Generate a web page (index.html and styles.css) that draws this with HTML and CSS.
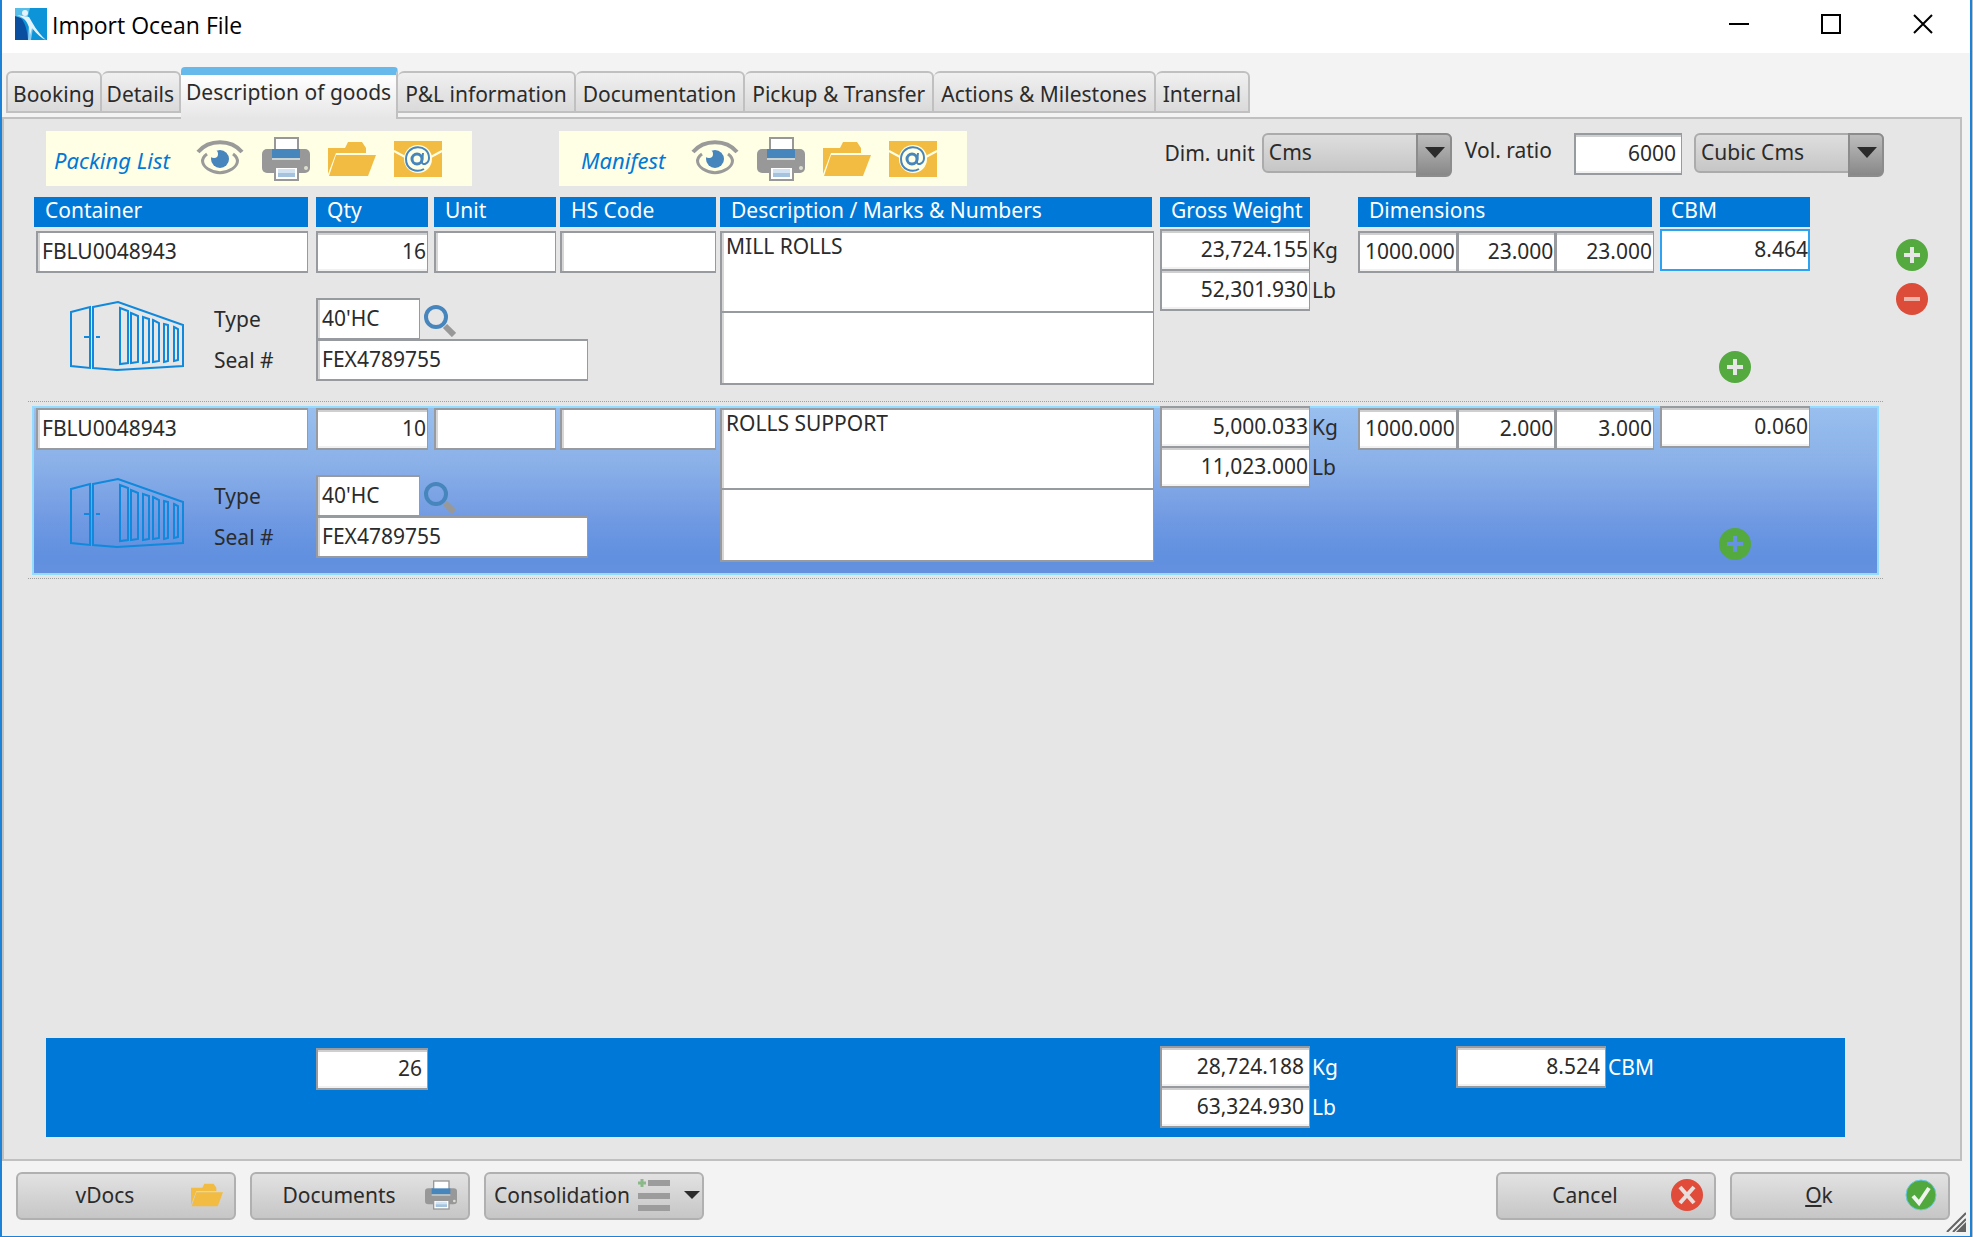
FILE: index.html
```html
<!DOCTYPE html>
<html lang="en">

<head>
    <meta charset="UTF-8">
    <meta name="viewport" content="width=device-width, initial-scale=1.0">
    <title>Import Ocean File</title>
    <link rel="stylesheet" href="styles.css">
</head>

<body>
    <!-- Shared icons -->
    <svg class="icon-defs" aria-hidden="true">
        <symbol id="icon-eye" viewBox="0 0 48 44">
            <path d="M2 15C13 2 35 2 46 15" fill="none" stroke="#9a9a9a" stroke-width="4" />
            <path d="M11 17C4 22 6 28 12 32c8 5 16 5 24 0 6-4 8-10 1-15" fill="none" stroke="#9a9a9a" stroke-width="3" />
            <circle cx="24" cy="22" r="9" fill="#4785bd" />
            <circle cx="18" cy="17" r="4" fill="#ffffe5" />
        </symbol>
        <symbol id="icon-printer" viewBox="0 0 48 44">
            <rect x="0" y="12" width="48" height="24" rx="5" fill="#989898" />
            <rect x="13" y="1" width="23" height="13" fill="#fff" stroke="#989898" stroke-width="2" />
            <rect x="10" y="12" width="28" height="9" fill="#4785bd" />
            <rect x="10" y="21" width="28" height="2" fill="#c8d3d6" />
            <rect x="13" y="30" width="23" height="13" fill="#fff" stroke="#989898" stroke-width="2" />
            <rect x="16" y="32" width="17" height="5" fill="#d3e3f2" />
            <rect x="16" y="36" width="17" height="4" fill="#a5c3df" />
            <circle cx="44" cy="31" r="2" fill="#deded0" />
        </symbol>
        <symbol id="icon-folder" viewBox="0 0 48 36">
            <path d="M0 33V7h17l3-6h14l4 6v5H8z" fill="#f1bc41" />
            <path d="M8 14h40l-8 21H1z" fill="#f1bc41" />
        </symbol>
        <symbol id="icon-mail" viewBox="0 0 48 36">
            <rect width="48" height="36" fill="#f1bc41" />
            <path d="M0 10l13 7M48 10l-13 7" stroke="#ffffe5" stroke-width="2" />
            <circle cx="24" cy="18" r="14" fill="#ffffe5" />
            <circle cx="23" cy="18" r="5" fill="none" stroke="#4785bd" stroke-width="3" />
            <path d="M29 12l-1 9c0 4 7 2 7-4 0-15-23-14-23 1 0 11 11 14 18 10" fill="none" stroke="#4785bd" stroke-width="2" />
        </symbol>
        <symbol id="icon-container" viewBox="0 0 114 70">
            <g fill="none" stroke="#1089dc" stroke-width="2">
                <path d="M1 11l19-5v61L1 65zM23 6l25-5 65 23v41l-66 4-24-2z" />
                <path d="M50 7l8 3v52l-8 1zM61 12l7 3v46l-7 1zM73 16l6 2v43l-6 1zM83 19l6 3v38l-6 1zM94 23l4 1v36l-4 1zM104 26l4 2v31l-4 1z" />
                <path d="M14 36h5M26 36h4" />
            </g>
        </symbol>
        <symbol id="icon-search" viewBox="0 0 32 32">
            <circle cx="12" cy="12" r="10" fill="none" stroke="#4785bd" stroke-width="4" />
            <path d="M21 21l9 9" stroke="#989898" stroke-width="6" />
        </symbol>
        <symbol id="icon-plus" viewBox="0 0 32 32">
            <path fill="#54a93f" fill-rule="evenodd" d="M16 0a16 16 0 1 1 0 32 16 16 0 0 1 0-32zM14 8v6H8v4h6v6h4v-6h6v-4h-6V8z" />
        </symbol>
        <symbol id="icon-minus" viewBox="0 0 32 32">
            <circle cx="16" cy="16" r="16" fill="#dc4c38" />
            <rect x="8" y="14" width="16" height="4" fill="#edb4ac" />
        </symbol>
    </svg>

    <div class="window">
        <header class="titlebar">
            <svg class="app-logo" viewBox="0 0 32 32" aria-hidden="true">
                <rect width="32" height="32" fill="#0d93d8" />
                <path d="M0 6c8 3 12 12 13 26H0z" fill="#0a4f9f" />
                <path d="M0 0h15l-3 12L0 8z" fill="#55bde8" />
                <path d="M14 14l4 6-2 12h-3z" fill="#8ccbee" />
                <path d="M2 7c8 3 10 7 12 12l1 8 2-7c5 6 9 10 14 12C22 24 17 14 14 9z" fill="#e3f3fc" />
                <circle cx="10" cy="5" r="3" fill="#e3f3fc" />
            </svg>
            <h1>Import Ocean File</h1>
            <div class="window-buttons">
                <button type="button" aria-label="Minimize"><svg viewBox="0 0 20 20"><path d="M0 10h20" /></svg></button>
                <button type="button" aria-label="Maximize"><svg viewBox="0 0 20 20"><path d="M1 1h18v18H1z" /></svg></button>
                <button type="button" aria-label="Close"><svg viewBox="0 0 20 20"><path d="M1 1l18 18M19 1L1 19" /></svg></button>
            </div>
        </header>

        <nav class="tabs">
            <a href="#booking">Booking</a>
            <a href="#details">Details</a>
            <a href="#goods" class="active">Description of goods</a>
            <a href="#pl">P&amp;L information</a>
            <a href="#documentation">Documentation</a>
            <a href="#pickup">Pickup &amp; Transfer</a>
            <a href="#actions">Actions &amp; Milestones</a>
            <a href="#internal">Internal</a>
        </nav>

        <main class="panel" id="goods">
            <div class="toolbar">
                <div class="doc-group">
                    <span class="doc-name">Packing List</span>
                    <button type="button" aria-label="View packing list"><svg class="icon-tall"><use href="#icon-eye" /></svg></button>
                    <button type="button" aria-label="Print packing list"><svg class="icon-tall"><use href="#icon-printer" /></svg></button>
                    <button type="button" aria-label="Open packing list"><svg class="icon-wide"><use href="#icon-folder" /></svg></button>
                    <button type="button" aria-label="Email packing list"><svg class="icon-wide"><use href="#icon-mail" /></svg></button>
                </div>
                <div class="doc-group manifest">
                    <span class="doc-name">Manifest</span>
                    <button type="button" aria-label="View manifest"><svg class="icon-tall"><use href="#icon-eye" /></svg></button>
                    <button type="button" aria-label="Print manifest"><svg class="icon-tall"><use href="#icon-printer" /></svg></button>
                    <button type="button" aria-label="Open manifest"><svg class="icon-wide"><use href="#icon-folder" /></svg></button>
                    <button type="button" aria-label="Email manifest"><svg class="icon-wide"><use href="#icon-mail" /></svg></button>
                </div>
                <div class="units">
                    <label for="dim-unit">Dim. unit</label>
                    <span class="select">
                        <select id="dim-unit">
                            <option>Cms</option>
                        </select>
                    </span>
                    <label class="ratio-label" for="vol-ratio">Vol. ratio</label>
                    <input class="field number ratio" type="text" id="vol-ratio" value="6000">
                    <span class="select">
                        <select aria-label="Volume unit">
                            <option>Cubic Cms</option>
                        </select>
                    </span>
                </div>
            </div>

            <div class="goods">
                <table>
                    <thead>
                        <tr>
                            <th>Container</th>
                            <th>Qty</th>
                            <th>Unit</th>
                            <th>HS Code</th>
                            <th>Description / Marks &amp; Numbers</th>
                            <th>Gross Weight</th>
                            <th>Dimensions</th>
                            <th>CBM</th>
                        </tr>
                    </thead>
                    <tbody>
                        <tr>
                            <td class="container"><input class="field" type="text" aria-label="Container" value="FBLU0048943"></td>
                            <td class="qty"><input class="field number" type="text" aria-label="Qty" value="16"></td>
                            <td class="unit"><input class="field" type="text" aria-label="Unit"></td>
                            <td class="hs"><input class="field" type="text" aria-label="HS Code"></td>
                            <td class="desc">
                                <textarea class="field" aria-label="Description">MILL ROLLS</textarea>
                                <textarea class="field marks" aria-label="Marks and numbers"></textarea>
                            </td>
                            <td class="weight">
                                <div><input class="field number" type="text" id="kg-1" value="23,724.155"><label for="kg-1">Kg</label></div>
                                <div><input class="field number" type="text" id="lb-1" value="52,301.930"><label for="lb-1">Lb</label></div>
                            </td>
                            <td class="dims">
                                <input class="field number" type="text" aria-label="Length" value="1000.000">
                                <input class="field number" type="text" aria-label="Width" value="23.000">
                                <input class="field number" type="text" aria-label="Height" value="23.000">
                            </td>
                            <td class="cbm">
                                <input class="field number focused" type="text" aria-label="CBM" value="8.464">
                                <button type="button" aria-label="Add dimensions"><svg class="icon-round"><use href="#icon-plus" /></svg></button>
                            </td>
                            <td class="equipment">
                                <svg class="icon-container"><use href="#icon-container" /></svg>
                                <div class="equipment-fields">
                                    <label for="type-1">Type</label>
                                    <div class="lookup">
                                        <input class="field" type="text" id="type-1" value="40'HC">
                                        <button type="button" aria-label="Find type"><svg class="icon-round"><use href="#icon-search" /></svg></button>
                                    </div>
                                    <label for="seal-1">Seal #</label>
                                    <input class="field" type="text" id="seal-1" value="FEX4789755">
                                </div>
                            </td>
                        </tr>
                        <tr class="selected">
                            <td class="container"><input class="field" type="text" aria-label="Container" value="FBLU0048943"></td>
                            <td class="qty"><input class="field number" type="text" aria-label="Qty" value="10"></td>
                            <td class="unit"><input class="field" type="text" aria-label="Unit"></td>
                            <td class="hs"><input class="field" type="text" aria-label="HS Code"></td>
                            <td class="desc">
                                <textarea class="field" aria-label="Description">ROLLS SUPPORT</textarea>
                                <textarea class="field marks" aria-label="Marks and numbers"></textarea>
                            </td>
                            <td class="weight">
                                <div><input class="field number" type="text" id="kg-2" value="5,000.033"><label for="kg-2">Kg</label></div>
                                <div><input class="field number" type="text" id="lb-2" value="11,023.000"><label for="lb-2">Lb</label></div>
                            </td>
                            <td class="dims">
                                <input class="field number" type="text" aria-label="Length" value="1000.000">
                                <input class="field number" type="text" aria-label="Width" value="2.000">
                                <input class="field number" type="text" aria-label="Height" value="3.000">
                            </td>
                            <td class="cbm">
                                <input class="field number" type="text" aria-label="CBM" value="0.060">
                                <button type="button" aria-label="Add dimensions"><svg class="icon-round"><use href="#icon-plus" /></svg></button>
                            </td>
                            <td class="equipment">
                                <svg class="icon-container"><use href="#icon-container" /></svg>
                                <div class="equipment-fields">
                                    <label for="type-2">Type</label>
                                    <div class="lookup">
                                        <input class="field" type="text" id="type-2" value="40'HC">
                                        <button type="button" aria-label="Find type"><svg class="icon-round"><use href="#icon-search" /></svg></button>
                                    </div>
                                    <label for="seal-2">Seal #</label>
                                    <input class="field" type="text" id="seal-2" value="FEX4789755">
                                </div>
                            </td>
                        </tr>
                    </tbody>
                </table>
                <div class="row-actions">
                    <button type="button" aria-label="Add row"><svg class="icon-round"><use href="#icon-plus" /></svg></button>
                    <button type="button" aria-label="Remove row"><svg class="icon-round"><use href="#icon-minus" /></svg></button>
                </div>
            </div>

            <div class="totals">
                <input class="field number total-qty" type="text" aria-label="Total quantity" value="26" readonly>
                <div class="weight total-weight">
                    <div><input class="field number" type="text" id="kg-total" value="28,724.188" readonly><label for="kg-total">Kg</label></div>
                    <div><input class="field number" type="text" id="lb-total" value="63,324.930" readonly><label for="lb-total">Lb</label></div>
                </div>
                <div class="weight">
                    <div><input class="field number" type="text" id="cbm-total" value="8.524" readonly><label for="cbm-total">CBM</label></div>
                </div>
            </div>
        </main>

        <footer class="actions">
            <button type="button" class="btn"><span>vDocs</span><svg class="btn-folder"><use href="#icon-folder" /></svg></button>
            <button type="button" class="btn"><span>Documents</span><svg class="btn-icon"><use href="#icon-printer" /></svg></button>
            <button type="button" class="btn consolidation">
                <span>Consolidation</span>
                <svg class="btn-icon" viewBox="0 0 32 32">
                    <path d="M10 4h22M0 17h32M0 29h32" stroke="#9c9c9c" stroke-width="6" />
                    <path d="M4 0v8M0 4h8" stroke="#8cb98a" stroke-width="3" />
                </svg>
                <svg class="btn-arrow" viewBox="0 0 16 8"><path d="M0 0h16L8 8z" fill="#2b2b2b" /></svg>
            </button>
            <button type="button" class="btn cancel"><span>Cancel</span>
                <svg class="btn-icon" viewBox="0 0 32 32">
                    <circle cx="16" cy="16" r="16" fill="#e04b3a" />
                    <path d="M9 8l14 16M23 8L9 24" stroke="#e9dddb" stroke-width="4" />
                </svg>
            </button>
            <button type="button" class="btn"><span><u>O</u>k</span>
                <svg class="btn-icon" viewBox="0 0 32 32">
                    <circle cx="16" cy="16" r="15" fill="#51a83c" stroke="#6cc8e8" />
                    <path d="M8 17l6 7L24 9" fill="none" stroke="#f0f4ef" stroke-width="4" />
                </svg>
            </button>
            <svg class="grip" viewBox="0 0 20 20" aria-hidden="true"><path d="M1 20L20 1M7 20L20 7" stroke="#636363" stroke-width="2" /><path d="M10 20L20 10v10z" fill="#636363" /></svg>
        </footer>
    </div>
</body>

</html>
```
FILE: styles.css
```css
* {
    box-sizing: border-box;
    margin: 0;
    padding: 0;
}

body {
    padding-right: 1px;
    background: #b9c3cc;
    color: #2b2b2b;
    font-family: "Noto Sans", "Open Sans", sans-serif;
    font-size: 21px;
    line-height: 24px;
}

button,
input,
select,
textarea {
    color: inherit;
    font: inherit;
}

button {
    background: none;
    border: none;
    cursor: pointer;
}

svg {
    display: block;
}

.icon-defs {
    position: absolute;
    width: 0;
    height: 0;
}

.window {
    position: relative;
    display: flex;
    flex-direction: column;
    min-height: 100vh;
    background: #f3f3f3;
    border: 2px solid #1c82d8;
    border-width: 0 2px 1px;
}

/* Title bar */
.titlebar {
    display: flex;
    align-items: center;
    height: 53px;
    padding: 0 1px 5px 13px;
    background: #fff;
}

.app-logo {
    width: 32px;
    height: 32px;
}

.titlebar h1 {
    flex: 1;
    margin-left: 5px;
    padding-top: 2px;
    color: #000;
    font-family: "Open Sans", "Noto Sans", sans-serif;
    font-size: 23px;
    font-weight: normal;
}

.window-buttons {
    display: flex;
}

.window-buttons button {
    display: flex;
    align-items: center;
    justify-content: center;
    width: 92px;
    height: 48px;
}

.window-buttons svg {
    width: 20px;
    height: 20px;
    fill: none;
    stroke: #000;
    stroke-width: 2;
}

/* Tabs */
.tabs {
    display: flex;
    align-items: flex-start;
    height: 64px;
    padding: 18px 4px 0;
}

.tabs a {
    height: 42px;
    padding: 9px 7px 0;
    background: linear-gradient(#f0f0f0, #dadada);
    border: 2px solid #c0c0c0;
    border-left-width: 0;
    border-radius: 6px 6px 0 0;
    color: inherit;
    text-decoration: none;
    white-space: nowrap;
}

.tabs a:first-child {
    border-left-width: 2px;
}

.tabs a:nth-child(-n + 2) {
    padding: 9px 5px 0;
}

.tabs .active {
    position: relative;
    height: 52px;
    margin-top: -4px;
    padding: 5px 5px 0;
    background: linear-gradient(#fff, #e6e6e6);
    border-top: 8px solid #66baeb;
    border-bottom: none;
    border-radius: 4px 4px 0 0;
}

/* Panel */
.panel {
    display: flex;
    flex: 1;
    flex-direction: column;
    margin-right: 8px;
    background: #e6e6e6;
    border: 2px solid #c0c0c0;
}

.toolbar {
    display: flex;
    align-items: flex-start;
    margin: 12px 76px 11px 42px;
}

.doc-group {
    display: flex;
    align-items: center;
    gap: 18px;
    height: 55px;
    padding: 0 30px 0 8px;
    background: #ffffe5;
}

.doc-group.manifest {
    margin-left: 87px;
    padding-left: 22px;
}

.doc-name {
    min-width: 124px;
    padding-top: 3px;
    color: #0078d7;
    font-size: 22px;
    font-style: italic;
}

.manifest .doc-name {
    min-width: 92px;
}

.icon-tall {
    width: 48px;
    height: 44px;
}

.icon-wide {
    width: 48px;
    height: 36px;
}

.units {
    display: flex;
    align-items: flex-start;
    gap: 12px;
    margin-left: auto;
    padding-top: 2px;
}

.units label {
    margin-right: -5px;
    padding-top: 8px;
}

.units .ratio-label {
    margin-right: 4px;
    margin-left: 2px;
    padding-top: 5px;
}

.units .ratio-label {
    margin: 0 10px 0 1px;
}

.select {
    position: relative;
}

.select select {
    display: block;
    width: 190px;
    height: 40px;
    padding: 0 36px 2px 5px;
    appearance: none;
    background: linear-gradient(#dedede, #c6c6c6);
    border: 2px solid #ababab;
    border-radius: 6px;
}

.select::before {
    content: "";
    position: absolute;
    top: 0;
    right: 0;
    width: 32px;
    height: 40px;
    background: linear-gradient(#bdbdbd, #888);
    border: 2px solid #8c8c8c;
    border-radius: 0 6px 6px 0;
    pointer-events: none;
}

.select::after {
    content: "";
    position: absolute;
    top: 14px;
    right: 7px;
    border: 10px solid transparent;
    border-top: 11px solid #2b2b2b;
    border-bottom: none;
    pointer-events: none;
}

/* Fields */
.field {
    display: block;
    width: 100%;
    height: 42px;
    padding: 0 4px 2px;
    background: #fff;
    border: 2px solid #979ba0;
    border-right-width: 1px;
    border-radius: 0;
    box-shadow: inset 2px 0 #d6d6d6;
    outline: none;
    resize: none;
}

.field.number {
    padding: 0 1px 2px;
    box-shadow: inset 0 2px #cfcfcf, inset 0 -2px #f1f1f1;
    text-align: right;
}

.field.focused {
    padding-right: 0;
    border: 2px solid #2ca3f2;
    box-shadow: none;
}

.field.ratio {
    width: 108px;
    padding-right: 5px;
}

/* Goods table */
.goods {
    display: flex;
    flex: 1;
    align-items: flex-start;
}

table,
thead,
tbody {
    display: block;
}

table {
    flex: 1;
    margin-left: 24px;
}

tr {
    display: grid;
    grid-template-columns: 282px 118px 126px 160px minmax(200px, 1fr) 198px 302px 150px;
}

thead tr {
    padding: 0 73px 0 6px;
}

th {
    height: 30px;
    margin-right: 8px;
    padding: 1px 11px;
    background: #0078d7;
    color: #fff;
    font-weight: normal;
    text-align: left;
    white-space: nowrap;
}

th:nth-child(2) {
    margin-right: 6px;
}

th:nth-child(3),
th:nth-child(4) {
    margin-right: 4px;
}

th:nth-child(6) {
    margin-right: 48px;
}

th:last-child {
    margin-right: 0;
}

tbody {
    margin-top: -2px;
}

tbody tr {
    position: relative;
    grid-template-rows: 68px 97px;
    padding: 6px 73px 5px 6px;
    border-bottom: 1px dotted #a0a0a0;
}

tbody tr.selected::before {
    content: "";
    position: absolute;
    inset: 4px 4px 3px;
    background: linear-gradient(#98bfee, #8ab0e8 35%, #6e98e2 70%, #6090df 90%, #6590e0);
    border: 2px solid #94dcff;
}

td {
    position: relative;
    grid-row: 1;
}

td.container {
    padding: 0 8px 0 2px;
}

td.qty {
    padding-right: 6px;
}

td.unit,
td.hs {
    padding-right: 4px;
}

td.desc {
    grid-row: 1 / 3;
    padding-right: 6px;
}

.desc .field {
    height: 82px;
    padding: 1px 4px;
}

.desc .marks {
    height: 74px;
    margin-top: -2px;
}

td.weight,
td.cbm {
    grid-row: 1 / 3;
    margin-top: -2px;
}

.weight div {
    display: flex;
    align-items: center;
    margin-bottom: -2px;
}

.weight .field {
    width: 150px;
}

.weight label {
    margin-left: 2px;
}

td.dims {
    display: flex;
    padding-right: 6px;
}

td.cbm button {
    display: block;
    margin: 80px auto 0;
}

.icon-round {
    width: 32px;
    height: 32px;
}

td.equipment {
    display: flex;
    grid-row: 2;
    grid-column: 1 / 5;
}

.icon-container {
    width: 114px;
    height: 70px;
    margin: 2px 30px 0 36px;
}

.equipment-fields {
    display: grid;
    grid-template-columns: 102px 272px;
    grid-template-rows: 40px 42px;
    align-items: center;
}

.lookup {
    display: flex;
    gap: 4px;
}

.lookup .field {
    width: 104px;
}

.lookup button {
    margin-top: 4px;
}

.row-actions {
    display: flex;
    flex-direction: column;
    gap: 12px;
    width: 77px;
    padding: 42px 0 0 13px;
}

/* Totals */
.totals {
    display: grid;
    grid-template-columns: 270px 112px 1fr 296px 389px;
    height: 99px;
    margin: 0 115px 22px 42px;
    padding-top: 8px;
    background: #0078d7;
}

.totals .total-qty {
    grid-column: 2;
    margin-top: 2px;
}

.totals .total-weight {
    grid-column: 4;
}

.totals label {
    color: #fff;
}

.totals .number {
    padding-right: 5px;
}

/* Bottom buttons */
.actions {
    display: flex;
    gap: 14px;
    padding: 11px 20px 16px 14px;
}

.btn {
    display: flex;
    align-items: center;
    gap: 10px;
    width: 220px;
    height: 48px;
    padding: 0 11px 2px;
    background: linear-gradient(#e2e2e2, #c6c6c6);
    border: 2px solid #b0b0b0;
    border-radius: 6px;
}

.btn span {
    flex: 1;
}

.btn-icon {
    width: 32px;
    height: 32px;
}

.btn-folder {
    width: 32px;
    height: 26px;
}

.btn.cancel {
    margin-left: auto;
}

.btn.consolidation {
    gap: 0;
    padding: 0 2px 2px 8px;
    text-align: left;
}

.btn-arrow {
    width: 16px;
    height: 10px;
    margin-left: 14px;
}

.grip {
    position: absolute;
    right: 4px;
    bottom: 4px;
    width: 20px;
    height: 20px;
}
```
